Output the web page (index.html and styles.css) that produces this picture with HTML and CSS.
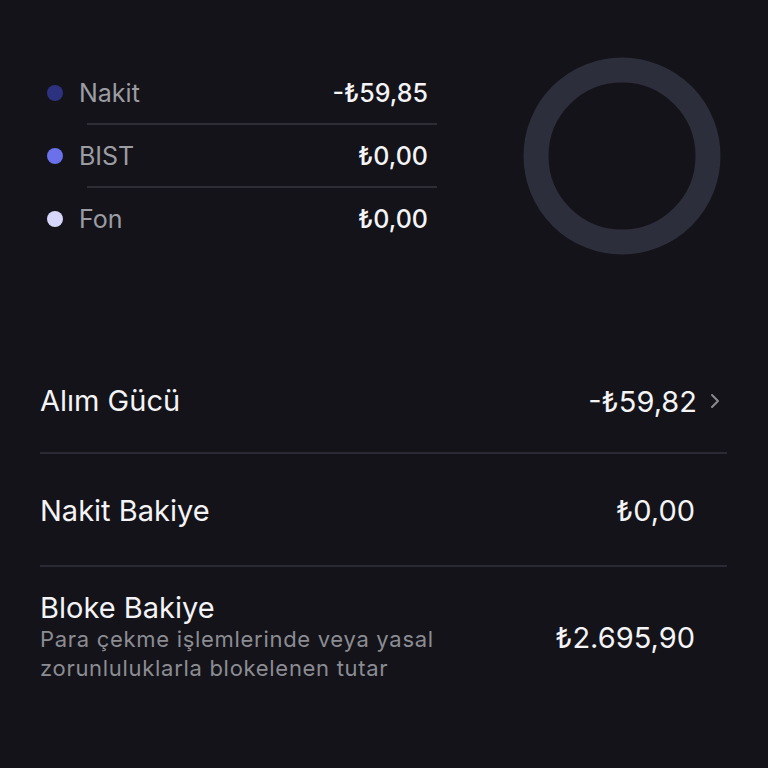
FILE: index.html
```html
<!DOCTYPE html>
<html lang="tr">

<head>
    <meta charset="UTF-8">
    <meta name="viewport" content="width=device-width, initial-scale=1.0">
    <title>Varlıklar</title>
    <link rel="stylesheet" href="styles.css">
</head>

<body>
    <div class="summary">
        <div class="legend">
            <div class="legend-row">
                <span class="dot dot-cash"></span>
                <span class="legend-label">Nakit</span>
                <span class="legend-value">-₺59,85</span>
            </div>
            <div class="legend-divider"></div>
            <div class="legend-row">
                <span class="dot dot-bist"></span>
                <span class="legend-label">BIST</span>
                <span class="legend-value">₺0,00</span>
            </div>
            <div class="legend-divider"></div>
            <div class="legend-row">
                <span class="dot dot-fund"></span>
                <span class="legend-label">Fon</span>
                <span class="legend-value">₺0,00</span>
            </div>
        </div>

        <svg class="donut" width="198" height="198" viewBox="0 0 198 198">
            <circle cx="99" cy="99" r="86" fill="none" stroke="#2d2e3b" stroke-width="25" />
        </svg>
    </div>

    <div class="balances">
        <div class="balance-row first">
            <span class="balance-title">Alım Gücü</span>
            <span class="balance-value">-₺59,82
                <svg class="chevron" width="12" height="18" viewBox="0 0 12 18">
                    <path d="M3 3 L9 9 L3 15" fill="none" stroke="#8a8a93" stroke-width="2" stroke-linecap="round" stroke-linejoin="round" />
                </svg>
            </span>
        </div>
        <div class="balance-row">
            <span class="balance-title">Nakit Bakiye</span>
            <span class="balance-value">₺0,00</span>
        </div>
        <div class="balance-row last">
            <div class="balance-text">
                <div class="balance-title">Bloke Bakiye</div>
                <div class="balance-note">Para çekme işlemlerinde veya yasal<br>zorunluluklarla blokelenen tutar</div>
            </div>
            <span class="balance-value">₺2.695,90</span>
        </div>
    </div>
</body>

</html>
```

FILE: styles.css
```css
body {
    margin: 0;
    background: #131319;
    color: #f4f4f6;
    font-family: Inter, "Noto Sans", sans-serif;
    height: 768px;
    overflow: hidden;
}

.summary {
    display: flex;
    align-items: flex-start;
    padding: 57px 0 0 47px;
}

.legend {
    width: 390px;
    padding-top: 5px;
}

.legend-row {
    display: flex;
    align-items: center;
    height: 61px;
    padding-right: 9px;
}

.legend-divider {
    height: 2px;
    margin-left: 40px;
    background: #2c2d35;
}

.dot {
    width: 16px;
    height: 16px;
    border-radius: 50%;
    margin-right: 16px;
}

.dot-cash { background: #2d3280; }
.dot-bist { background: #6a71ea; }
.dot-fund { background: #d6d7fb; }

.legend-label {
    flex: 1;
    font-size: 25px;
    color: #9c9ca3;
}

.legend-value {
    font-size: 25px;
    font-weight: 500;
    color: #f4f4f6;
}

.donut {
    margin-left: 86px;
}

.balances {
    margin: 95px 41px 0 40px;
}

.balance-row {
    display: flex;
    align-items: center;
    justify-content: space-between;
    height: 109px;
    padding: 2px 32px 0 0;
    border-bottom: 2px solid #292a33;
}

.balance-row.first {
    height: 102px;
    padding: 0 6px 0 0;
}

.balance-row.last {
    height: auto;
    padding-top: 24px;
    border-bottom: none;
}

.balance-title {
    font-size: 29px;
    line-height: 34px;
}

.balance-note {
    font-size: 22px;
    line-height: 29px;
    letter-spacing: 0.7px;
    color: #8c8c93;
}

.balance-value {
    display: flex;
    align-items: center;
    font-size: 29px;
}

.chevron {
    margin-left: 12px;
}
```
